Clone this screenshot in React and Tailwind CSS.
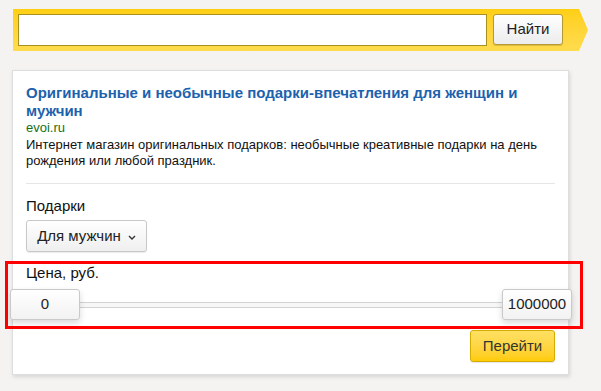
import React from 'react';

const font = { fontFamily: '"Liberation Sans", Arial, sans-serif' };

function SearchBar() {
  return (
    <div className="pl-[13px] pt-[9px]">
      <div
        className="flex h-[42px] w-[575px] items-start gap-[6px] bg-gradient-to-b from-[#ffcf10] to-[#ffdc4e] pl-[5px] pt-[5px]"
        style={{ clipPath: 'polygon(0 0, 566px 0, 575px 50%, 566px 100%, 0 100%)' }}
      >
        <input
          className="h-[32px] w-[469px] border border-[#a8901f] bg-white px-2 text-[15px] outline-none"
          style={font}
        />
        <button className="h-[31px] w-[70px] rounded-[3px] border border-[#b49a35] bg-gradient-to-b from-white to-[#ececec] text-[15px] text-[#222] shadow-[0_1px_1px_rgba(0,0,0,0.15)]">
          Найти
        </button>
      </div>
    </div>
  );
}

function Thumb({ children }) {
  return (
    <div className="relative z-10 flex h-[31px] w-[70px] shrink-0 items-center justify-center rounded-[3px] border border-[#c9c9c9] bg-gradient-to-b from-white to-[#f2f2f2] text-[15px] text-[#222] shadow-[0_3px_6px_rgba(0,0,0,0.15)]">
      {children}
    </div>
  );
}

export default function App() {
  return (
    <div className="relative min-h-screen bg-[#f4f3f1]" style={font}>
      <SearchBar />

      {/* Ad card */}
      <div className="ml-[12px] mt-[19px] w-[557px] border border-[#dedede] bg-white px-[13px] pb-[12px] pt-[13px] shadow-[1px_2px_4px_rgba(0,0,0,0.12)]">
        <a className="block text-[15px] font-bold leading-[18px] text-[#1d62ad]">
          Оригинальные и необычные подарки-впечатления для женщин и мужчин
        </a>
        <div className="text-[13px] leading-[16px] text-[#157015]">evoi.ru</div>
        <p className="mt-[1px] text-[13px] leading-[16px] text-[#111]">
          Интернет магазин оригинальных подарков: необычные креативные подарки на день рождения или любой праздник.
        </p>
        <div className="mt-[14px] h-px bg-[#e6e6e6]" />

        <div className="mt-[13px] text-[15px] leading-[18px] text-[#111]">Подарки</div>
        <button className="mt-[5px] flex h-[32px] w-[121px] items-center justify-center gap-[7px] rounded-[3px] border border-[#c8c8c8] bg-gradient-to-b from-white to-[#efefef] text-[15px] text-[#222] shadow-[0_1px_1px_rgba(0,0,0,0.08)]">
          Для мужчин
          <svg width="8" height="5" viewBox="0 0 8 5" className="mt-[2px]">
            <path d="M1 1 L4 4 L7 1" fill="none" stroke="#333" strokeWidth="1.4" />
          </svg>
        </button>

        <div className="mt-[12px] text-[15px] leading-[18px] text-[#111]">Цена, руб.</div>
        <div className="relative -ml-[16px] -mr-[17px] mt-[7px] flex items-center justify-between">
          <div className="absolute left-[35px] right-[35px] top-[13px] h-[6px] border-y border-[#d2d2d2] bg-[#f7f7f7]" />
          <Thumb>0</Thumb>
          <Thumb>1000000</Thumb>
        </div>

        <div className="mt-[10px] flex justify-end">
          <button className="h-[32px] w-[85px] rounded-[3px] border border-[#d4ad00] bg-gradient-to-b from-[#ffe062] to-[#ffcc00] text-[15px] text-[#333] shadow-[0_1px_1px_rgba(0,0,0,0.1)]">
            Перейти
          </button>
        </div>
      </div>

      {/* red highlight frame */}
      <div className="pointer-events-none absolute left-[5px] top-[261px] h-[68px] w-[578px] border-[3px] border-[#ff0000]" />
    </div>
  );
}
